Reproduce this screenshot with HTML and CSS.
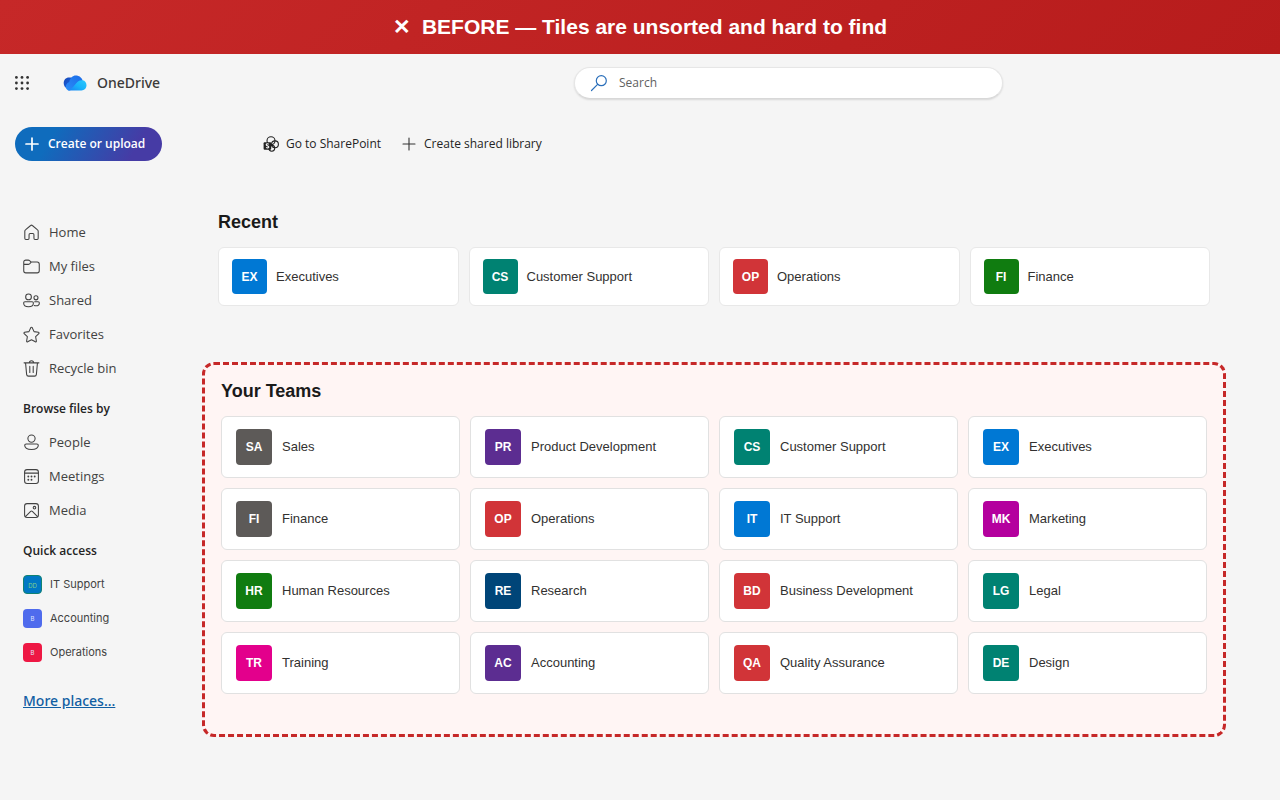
FILE: index.html
```html
<!DOCTYPE html>
<html lang="en">
<head>
<meta charset="utf-8">
<meta name="viewport" content="width=device-width, initial-scale=1">
<title>OneDrive</title>
<link rel="stylesheet" href="styles.css">
</head>
<body>
<div class="banner"><span class="banner-mark">✕</span><span>BEFORE — Tiles are unsorted and hard to find</span></div>

<header class="header">
  <div class="brand">
    <button class="launcher" type="button" aria-label="App launcher">
      <svg width="16" height="16" viewBox="0 0 16 16" fill="#333"><circle cx="2.4" cy="2.4" r="1.4"/><circle cx="8" cy="2.4" r="1.4"/><circle cx="13.6" cy="2.4" r="1.4"/><circle cx="2.4" cy="8" r="1.4"/><circle cx="8" cy="8" r="1.4"/><circle cx="13.6" cy="8" r="1.4"/><circle cx="2.4" cy="13.6" r="1.4"/><circle cx="8" cy="13.6" r="1.4"/><circle cx="13.6" cy="13.6" r="1.4"/></svg>
    </button>
    <svg class="logo" width="24" height="16" viewBox="0 0 24 16" aria-hidden="true">
      <defs>
        <linearGradient id="g1" x1="0" y1="0" x2="1" y2="1"><stop offset="0" stop-color="#1747b5"/><stop offset="1" stop-color="#1c6df0"/></linearGradient>
        <linearGradient id="g2" x1="0" y1="1" x2="1" y2="0"><stop offset="0" stop-color="#2b8df8"/><stop offset="1" stop-color="#1a6be8"/></linearGradient>
        <linearGradient id="g3" x1="0" y1="1" x2="1" y2="0"><stop offset="0" stop-color="#1c7ff2"/><stop offset=".5" stop-color="#19b4fb"/><stop offset="1" stop-color="#2cc8fd"/></linearGradient>
      </defs>
      <path d="M6 2.600C2.800 2.600.6 5 .7 8.200.8 10.500 1.800 12.200 3.400 13.200L12 3.500C10 2.600 8 2.500 6 2.600z" fill="url(#g1)"/>
      <path d="M3 13.200C2.200 10.400 3.800 8.300 6.200 7 7.200 2.800 9.600.4 12.800.4c3.400 0 6 2.200 6.900 5.200L7 15.500c-1.800 0-3.300-.9-4-2.300z" fill="url(#g2)"/>
      <path d="M4.500 14.900c4-.6 5.500-2.900 7.500-5.200 2-2.600 4.200-4.900 7.700-4.500 2.300.4 3.800 2.500 3.800 5.100 0 3.100-2.200 5.200-5 5.200H7c-.8 0-1.700-.2-2.500-.6z" fill="url(#g3)"/>
    </svg>
    <span class="brand-name">OneDrive</span>
  </div>
  <label class="search">
    <svg width="18" height="18" viewBox="0 0 18 18" fill="none" stroke="#2a6fba" stroke-width="1.2"><circle cx="11.300" cy="6.700" r="5"/><path d="M7.600 10.400 1.500 16.500" stroke-linecap="round"/></svg>
    <input class="search-input" type="search" placeholder="Search" aria-label="Search">
  </label>
</header>

<div class="toolbar">
  <div class="toolbar-side">
    <button class="create" type="button">
      <svg width="14" height="14" viewBox="0 0 14 14" stroke="#fff" stroke-width="1.700" stroke-linecap="round"><path d="M7 1v12M1 7h12"/></svg>
      Create or upload
    </button>
  </div>
  <div class="toolbar-actions">
    <button class="action" type="button">
      <svg width="16" height="16" viewBox="0 0 16 16" fill="none" stroke="#222" stroke-width="1.100"><circle cx="8" cy="4.800" r="4"/><circle cx="12" cy="8.300" r="3.400"/><circle cx="8.800" cy="12.300" r="2.900"/><rect x=".6" y="6.300" width="7.600" height="7.400" rx="1" fill="#222" stroke="none"/><path d="M5.700 8.200c-1-.7-2.500-.4-2.500.6 0 1.400 2.600.8 2.600 2.200 0 1-1.700 1.200-2.700.4" stroke="#f5f5f5"/></svg>
      Go to SharePoint
    </button>
    <button class="action" type="button">
      <svg width="16" height="16" viewBox="0 0 16 16" stroke="#333" stroke-width="1.100" stroke-linecap="round"><path d="M8 2v12M2 8h12"/></svg>
      Create shared library
    </button>
  </div>
</div>

<div class="layout">
  <nav class="sidebar" aria-label="Files">
    <ul class="nav-list">
      <li><a class="nav-link" href="#"><svg class="icon" viewBox="0 0 16 16"><path d="M7.200 1.400 2.300 5.500c-.4.300-.6.800-.6 1.300v6.700c0 .6.400 1.100 1 1.100h2c.6 0 1-.5 1-1.100V10c0-.6.500-1 1-1h2.600c.6 0 1 .400 1 1v3.500c0 .6.400 1.100 1 1.100h2c.6 0 1-.5 1-1.100V6.800c0-.5-.2-1-.6-1.300L8.800 1.400a1.200 1.200 0 0 0-1.600 0z"/></svg>Home</a></li>
      <li><a class="nav-link" href="#"><svg class="icon" viewBox="0 0 16 16"><path d="M.7 4A2 2 0 0 1 2.700 2h2.200c.5 0 1 .200 1.300.5l1.500 1.300h5.600a2 2 0 0 1 2 2v6.200a2 2 0 0 1-2 2H2.700a2 2 0 0 1-2-2zM.7 6h4.200c.5 0 .9-.2 1.300-.5l1.500-1.700"/></svg>My files</a></li>
      <li><a class="nav-link" href="#"><svg class="icon" viewBox="0 0 16 16"><circle cx="5.200" cy="4.600" r="2.700"/><circle cx="12.200" cy="5.500" r="1.900"/><path d="M1.800 9.200h6.800c.7 0 1.200.5 1.200 1.100 0 2.200-1.900 3.500-4.600 3.500S.6 12.500.6 10.300c0-.6.500-1.100 1.200-1.100zM11 9.200h3.200c.7 0 1.200.5 1.200 1.100 0 1.900-1.500 2.700-3.200 2.700-.6 0-1.100-.1-1.600-.3"/></svg>Shared</a></li>
      <li><a class="nav-link" href="#"><svg class="icon" viewBox="0 0 16 16"><path d="M7.400 1.500c.2-.5 1-.5 1.200 0l1.800 3.800 4.100.6c.6.100.8.800.4 1.200l-3 3 .7 4.100c.1.600-.5 1-1 .7L8 13l-3.600 1.900c-.5.300-1.100-.1-1-.7l.7-4.100-3-3c-.4-.4-.2-1.100.4-1.200l4.100-.6z"/></svg>Favorites</a></li>
      <li><a class="nav-link" href="#"><svg class="icon" viewBox="0 0 16 16"><path d="M1 2.700h14M6 2.700a2 2 0 0 1 4 0M2.400 2.700l1 10.800c.1.900.8 1.700 1.700 1.700h5.800c.9 0 1.600-.8 1.700-1.700l1-10.800M6.400 6v5.800M9.600 6v5.800"/></svg>Recycle bin</a></li>
    </ul>
    <h2 class="nav-heading">Browse files by</h2>
    <ul class="nav-list">
      <li><a class="nav-link" href="#"><svg class="icon" viewBox="0 0 16 16"><circle cx="8" cy="4.300" r="3.400"/><path d="M3 9.400h10c.9 0 1.400.5 1.400 1.200 0 2.500-2.700 3.900-6.400 3.900s-6.400-1.400-6.400-3.900c0-.7.5-1.200 1.400-1.200z"/></svg>People</a></li>
      <li><a class="nav-link" href="#"><svg class="icon" viewBox="0 0 16 16"><rect x="1.500" y="1.500" width="13" height="13" rx="2.300"/><path d="M1.500 4.800h13"/><g fill="#424242" stroke="none"><circle cx="5" cy="8" r=".9"/><circle cx="8" cy="8" r=".9"/><circle cx="11" cy="8" r=".9"/><circle cx="5" cy="11" r=".9"/><circle cx="8" cy="11" r=".9"/></g></svg>Meetings</a></li>
      <li><a class="nav-link" href="#"><svg class="icon" viewBox="0 0 16 16"><rect x="1.500" y="1.500" width="13" height="13" rx="2.300"/><circle cx="10.800" cy="5.300" r="1.200"/><path d="m2.300 13.700 4.900-4.900c.5-.5 1.100-.5 1.600 0l4.900 4.900"/></svg>Media</a></li>
    </ul>
    <h2 class="nav-heading">Quick access</h2>
    <ul class="nav-list">
      <li><a class="nav-link quick" href="#"><span class="chip chip-it">DD</span>IT Support</a></li>
      <li><a class="nav-link quick" href="#"><span class="chip chip-accounting">B</span>Accounting</a></li>
      <li><a class="nav-link quick" href="#"><span class="chip chip-operations">B</span>Operations</a></li>
    </ul>
    <a class="more" href="#">More places...</a>
  </nav>

  <main class="content">
    <section class="recent">
      <h1 class="title">Recent</h1>
      <div class="tiles">
        <a class="tile" href="#"><span class="badge blue">EX</span>Executives</a>
        <a class="tile" href="#"><span class="badge teal">CS</span>Customer Support</a>
        <a class="tile" href="#"><span class="badge red">OP</span>Operations</a>
        <a class="tile" href="#"><span class="badge green">FI</span>Finance</a>
      </div>
    </section>
    <section class="teams">
      <h1 class="title">Your Teams</h1>
      <div class="tiles">
        <a class="tile" href="#"><span class="badge gray">SA</span>Sales</a>
        <a class="tile" href="#"><span class="badge purple">PR</span>Product Development</a>
        <a class="tile" href="#"><span class="badge teal">CS</span>Customer Support</a>
        <a class="tile" href="#"><span class="badge blue">EX</span>Executives</a>
        <a class="tile" href="#"><span class="badge gray">FI</span>Finance</a>
        <a class="tile" href="#"><span class="badge red">OP</span>Operations</a>
        <a class="tile" href="#"><span class="badge blue">IT</span>IT Support</a>
        <a class="tile" href="#"><span class="badge magenta">MK</span>Marketing</a>
        <a class="tile" href="#"><span class="badge green">HR</span>Human Resources</a>
        <a class="tile" href="#"><span class="badge navy">RE</span>Research</a>
        <a class="tile" href="#"><span class="badge red">BD</span>Business Development</a>
        <a class="tile" href="#"><span class="badge teal">LG</span>Legal</a>
        <a class="tile" href="#"><span class="badge pink">TR</span>Training</a>
        <a class="tile" href="#"><span class="badge purple">AC</span>Accounting</a>
        <a class="tile" href="#"><span class="badge red">QA</span>Quality Assurance</a>
        <a class="tile" href="#"><span class="badge teal">DE</span>Design</a>
      </div>
    </section>
  </main>
</div>
</body>
</html>
```
FILE: styles.css
```css
* { box-sizing: border-box; }

body {
  margin: 0;
  background: #f5f5f5;
  color: #242424;
  font: 13px/20px "Open Sans", "Noto Sans", sans-serif;
}

a { color: inherit; text-decoration: none; }
button { font: inherit; color: inherit; border: 0; background: none; padding: 0; }
svg { display: block; flex: none; }
ul { list-style: none; margin: 0; padding: 0; }

.banner {
  display: flex;
  justify-content: center;
  align-items: center;
  gap: 11px;
  height: 54px;
  background: linear-gradient(135deg, #c62828, #b71c1c);
  color: #fff;
  font: bold 21px/24px "Liberation Sans", Arial, sans-serif;
}

.header {
  display: grid;
  grid-template-columns: 574fr 429fr 277fr;
  align-items: center;
  height: 58px;
}
.brand { display: flex; align-items: center; padding-left: 14px; }
.logo { margin-left: 33px; }
.brand-name { margin-left: 10px; font-family: "Noto Sans", sans-serif; font-size: 14px; font-weight: 500; color: #3b3a39; }

.search {
  display: flex;
  align-items: center;
  gap: 11px;
  height: 32px;
  padding: 0 15px;
  border: 1px solid #e6e6e6;
  border-bottom-color: #d8d8d8;
  border-radius: 16px;
  background: #fff;
  box-shadow: 0 1px 2px rgba(0, 0, 0, .12);
}
.search-input { flex: 1; min-width: 0; border: 0; outline: 0; padding: 0; background: none; font: inherit; font-size: 12px; }
.search-input::placeholder { color: #616161; opacity: 1; }

.toolbar { display: flex; align-items: center; height: 64px; font-size: 12px; }
.toolbar-side { width: 263px; padding-left: 15px; }
.create {
  display: flex;
  align-items: center;
  gap: 9px;
  height: 34px;
  padding: 0 17px 0 10px;
  border-radius: 17px;
  background: linear-gradient(120deg, #0f6cbd 25%, #463ba5 80%);
  color: #fff;
  font-weight: 600;
}
.toolbar-actions { display: flex; gap: 20px; }
.action { display: flex; align-items: center; gap: 7px; }

.layout { display: flex; align-items: flex-start; }
.sidebar { width: 202px; flex: none; padding: 39px 12px 24px 23px; }
.nav-link { display: flex; align-items: center; gap: 9px; height: 34px; color: #424242; }
.icon { width: 17px; height: 17px; fill: none; stroke: #424242; stroke-width: 1; stroke-linejoin: round; stroke-linecap: round; }
.nav-heading { margin: 14px 0 6px; font-size: 12px; line-height: 20px; font-weight: 600; }
.quick { gap: 8px; font-family: Inter, sans-serif; font-size: 11px; }
.chip {
  display: grid;
  place-items: center;
  width: 19px;
  height: 19px;
  border-radius: 4px;
  color: #dfe3ff;
  font-size: 6px;
}
.chip-it { background: #0078c4; border: 1px solid #118272; color: #7fd08a; }
.chip-accounting { background: #4f6bed; }
.chip-operations { background: #ee1844; }
.more {
  display: inline-block;
  margin-top: 22px;
  color: #115ea3;
  font-family: "Noto Sans", sans-serif;
  font-size: 14px;
  font-weight: 500;
  text-decoration: underline;
}

.content {
  flex: 1;
  min-width: 0;
  padding: 35px 54px 24px 0;
  font-family: "Liberation Sans", Arial, sans-serif;
}
.title { margin: 0 0 14px; font-size: 18px; line-height: 22px; font-weight: 700; color: #1a1a1a; }
.tiles { display: grid; grid-template-columns: repeat(4, minmax(0, 1fr)); gap: 10px; }
.tile {
  display: flex;
  align-items: center;
  gap: 10px;
  padding: 12px 14px;
  border: 1px solid #e1e1e1;
  border-radius: 6px;
  background: #fff;
  color: #323130;
}
.badge {
  display: grid;
  place-items: center;
  flex: none;
  width: 36px;
  height: 36px;
  border-radius: 4px;
  color: #fff;
  font-size: 12px;
  font-weight: 700;
}
.recent { padding: 0 16px; }
.recent .tile { padding: 11px 13px; border-color: #e8e8e8; gap: 9px; }
.recent .badge { width: 35px; height: 35px; }
.teams {
  margin-top: 56px;
  padding: 15px 16px 40px;
  border: 3px dashed #c62828;
  border-radius: 12px;
  background: #fff5f4;
}

.blue { background: #0078d4; }
.teal { background: #008272; }
.red { background: #d13438; }
.green { background: #107c10; }
.gray { background: #5d5a58; }
.purple { background: #5c2d91; }
.magenta { background: #b4009e; }
.navy { background: #004578; }
.pink { background: #e3008c; }
```
